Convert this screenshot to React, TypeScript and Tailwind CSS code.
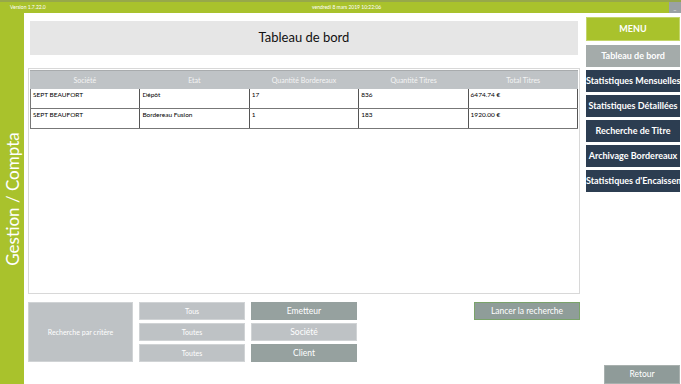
import React from "react";

const rows = [
  ["SEPT BEAUFORT", "Dépôt", "17", "836", "6474.74 €"],
  ["SEPT BEAUFORT", "Bordereau Fusion", "1", "183", "1920.00 €"],
];
const headers = ["Société", "Etat", "Quantité Bordereaux", "Quantité Titres", "Total Titres"];

export default function App() {
  return (
    <div
      className="w-[681px] h-[384px] flex flex-col bg-white overflow-hidden"
      style={{ fontFamily: "Lato, 'Open Sans', sans-serif" }}
    >
      {/* top bar */}
      <div className="h-[13px] flex bg-[#a9c22c] border-t-[2px] border-[#97a84a] relative">
        <div className="flex-1 flex items-center text-[5px] text-white">
          <span className="ml-[10px]">Version 1.7.22.0</span>
          <span className="absolute left-[312px] top-[2px]">vendredi 8 mars 2019 10:22:06</span>
        </div>
        <div className="w-[12px] bg-[#9aa1a4] flex items-end justify-center text-[6px] text-white leading-none pb-[2px]">_</div>
      </div>
      <div className="flex flex-1 min-h-0">
        {/* left strip */}
        <div className="w-[24px] bg-[#a9c22c] relative">
          <div className="absolute left-[12px] top-[186px] -translate-x-1/2 -translate-y-1/2 -rotate-90 whitespace-nowrap text-white text-[17px] leading-none">
            Gestion / Compta
          </div>
        </div>
        {/* main */}
        <div className="w-[562px] flex flex-col">
          <div className="mt-[8px] ml-[6px] mr-[8px] h-[34px] bg-[#e6e6e6] flex items-center justify-center text-[13px] text-[#111]">
            Tableau de bord
          </div>
          <div className="mt-[13px] ml-[4px] mr-[6px] h-[226px] border border-[#d8d8d8] px-[1px] pt-[1px]">
            <div className="grid grid-cols-5 h-[19px] bg-[#bfc3c6] text-[7px] text-[#f4f4f4] border-t border-[#a8abad]">
              {headers.map((h) => (
                <div key={h} className="flex items-center justify-center">{h}</div>
              ))}
            </div>
            {rows.map((r, i) => (
              <div key={i} className="grid grid-cols-5 h-[20px] border-b-[1.5px] border-[#555] border-l border-[#777]">
                {r.map((c, j) => (
                  <div key={j} className="text-[6.5px] text-black pl-[2px] pt-[3px] leading-none border-r border-[#555]">
                    {c}
                  </div>
                ))}
              </div>
            ))}
          </div>
          <div className="mt-[8px] ml-[4px] flex text-white text-[7px]">
            <div className="w-[105px] h-[60px] bg-[#bec2c5] border border-[#d0d3d5] flex items-center justify-center">
              Recherche par critère
            </div>
            <div className="ml-[6px] flex flex-col gap-[3px]">
              {["Tous", "Toutes", "Toutes"].map((t, i) => (
                <div key={i} className="w-[106px] h-[18px] bg-[#bec2c5] border border-[#d0d3d5] flex items-center justify-center">{t}</div>
              ))}
            </div>
            <div className="ml-[6px] flex flex-col gap-[3px] text-[8.5px]">
              <div className="w-[106px] h-[18px] bg-[#96a19f] flex items-center justify-center">Emetteur</div>
              <div className="w-[106px] h-[18px] bg-[#bec2c5] border border-[#d0d3d5] flex items-center justify-center">Société</div>
              <div className="w-[106px] h-[18px] bg-[#96a19f] flex items-center justify-center">Client</div>
            </div>
            <div className="ml-[117px] w-[106px] h-[18px] bg-[#8f9d99] border border-[#7aa36a] flex items-center justify-center text-[8.5px]">
              Lancer la recherche
            </div>
          </div>
        </div>
        {/* right menu */}
        <div className="w-[95px] flex flex-col">
          <div className="mt-[4px] w-[94px] h-[24px] bg-[#a9c22c] border border-[#c3d56a] flex items-center justify-center text-white text-[9px] font-bold">
            MENU
          </div>
          <div className="mt-[4px] w-[94px] h-[22px] bg-[#a4abaa] flex items-center justify-center text-white text-[9px] font-bold whitespace-nowrap overflow-hidden">
            Tableau de bord
          </div>
          {["Statistiques Mensuelles", "Statistiques Détaillées", "Recherche de Titre", "Archivage Bordereaux", "Statistiques d'Encaissement"].map((t, i) => (
            <div
              key={t}
              className={`mt-[3px] w-[94px] h-[22px] bg-[#2c3d51] flex items-center text-white text-[9px] font-bold whitespace-nowrap overflow-hidden ${i === 0 || i === 4 ? "justify-start" : "justify-center"}`}
            >
              {t}
            </div>
          ))}
          <div className="flex-1" />
          <div className="ml-[18px] w-[76px] h-[19px] bg-[#8f9b99] border border-[#a8b0ae] flex items-center justify-center text-white text-[8.5px]">
            Retour
          </div>
        </div>
      </div>
    </div>
  );
}
